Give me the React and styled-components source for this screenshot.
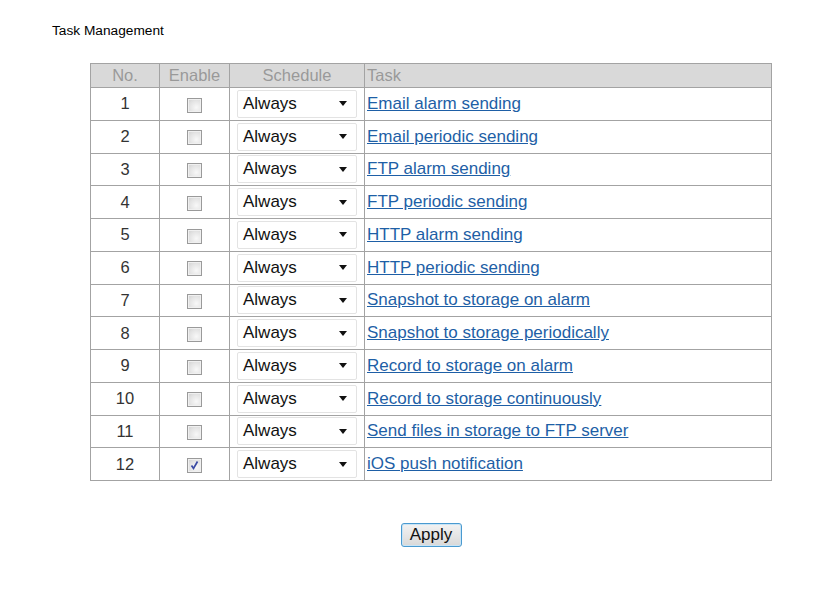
import React from 'react'
import styled, { createGlobalStyle } from 'styled-components'

const GlobalStyle = createGlobalStyle`
  body {
    margin: 0;
    background: #ffffff;
    font-family: "Liberation Sans", Arial, sans-serif;
    color: #000;
  }
`

const Page = styled.div`
  width: 831px;
  min-height: 610px;
  padding-top: 22px;
  box-sizing: border-box;
`

const Title = styled.div`
  font-size: 13.7px;
  margin-left: 52px;
  height: 17px;
  line-height: 17px;
`

const Table = styled.table`
  border-collapse: collapse;
  margin: 24px 0 0 90px;
  width: 682px;
  table-layout: fixed;
  font-size: 16.5px;
`

const Head = styled.th`
  background: #d9d9d9;
  color: #999999;
  font-weight: normal;
  font-size: 16.5px;
  border: 1px solid #a3a3a3;
  height: 23px;
  padding: 0;
  text-align: ${p => p.$left ? 'left' : 'center'};
  padding-left: ${p => p.$left ? '2px' : '0'};
`

const Cell = styled.td`
  border: 1px solid #a3a3a3;
  height: 31.75px;
  padding: 0;
  text-align: ${p => p.$align || 'center'};
  padding-left: ${p => p.$pad || 0};
  color: #333;
  vertical-align: middle;
`

const Check = styled.span`
  display: inline-block;
  width: 13px;
  height: 13px;
  border: 1px solid #9a9a9a;
  background: radial-gradient(circle at 65% 65%, #f8f8f8 0%, #e4e4e4 55%, #cfcfcf 100%);
  box-shadow: inset 0 0 0 1px #f0f0f0;
  position: relative;
  vertical-align: middle;
  svg {
    position: absolute;
    left: 1px;
    top: 1px;
  }
`

const Select = styled.div`
  width: 118px;
  height: 26px;
  border: 1px solid #e3e3e3;
  border-radius: 2px;
  box-sizing: content-box;
  display: flex;
  align-items: center;
  justify-content: space-between;
  background: #fff;
`

const SelectText = styled.span`
  color: #111;
  font-size: 17px;
  padding-left: 5px;
`

const Arrow = styled.span`
  width: 0;
  height: 0;
  border-left: 4px solid transparent;
  border-right: 4px solid transparent;
  border-top: 5px solid #111;
  margin-right: 9px;
`

const TaskLink = styled.a`
  color: #1e5fa6;
  text-decoration: underline;
  font-size: 17px;
`

const Footer = styled.div`
  display: flex;
  justify-content: center;
  width: 682px;
  margin: 42px 0 0 90px;
`

const ApplyButton = styled.button`
  width: 61px;
  height: 24px;
  padding: 0;
  font-family: "Liberation Sans", Arial, sans-serif;
  font-size: 17px;
  color: #111;
  border: 1px solid #4a9ad0;
  border-radius: 3px;
  background: linear-gradient(#f2f2f2 0%, #e6e6e6 50%, #d8d8d8 100%);
  box-shadow: inset 0 0 0 1px #c8e4f6;
`

const tasks = [
  'Email alarm sending',
  'Email periodic sending',
  'FTP alarm sending',
  'FTP periodic sending',
  'HTTP alarm sending',
  'HTTP periodic sending',
  'Snapshot to storage on alarm',
  'Snapshot to storage periodically',
  'Record to storage on alarm',
  'Record to storage continuously',
  'Send files in storage to FTP server',
  'iOS push notification',
]

const Checkbox = ({ checked }) => (
  <Check>
    {checked && (
      <svg width="11" height="11" viewBox="0 0 11 11">
        <path d="M2.5 5.5 L4.5 8.5 L8.5 1.5" stroke="#3a4aa3" strokeWidth="1.7" fill="none" />
      </svg>
    )}
  </Check>
)

const App = () => {
  return (
    <Page>
      <GlobalStyle />
      <Title>Task Management</Title>
      <Table>
        <colgroup>
          <col style={{ width: 69 }} />
          <col style={{ width: 70 }} />
          <col style={{ width: 135 }} />
          <col />
        </colgroup>
        <thead>
          <tr>
            <Head>No.</Head>
            <Head>Enable</Head>
            <Head>Schedule</Head>
            <Head $left>Task</Head>
          </tr>
        </thead>
        <tbody>
          {tasks.map((t, i) => (
            <tr key={t}>
              <Cell>{i + 1}</Cell>
              <Cell><Checkbox checked={i === 11} /></Cell>
              <Cell $align="left" $pad="7px">
                <Select>
                  <SelectText>Always</SelectText>
                  <Arrow />
                </Select>
              </Cell>
              <Cell $align="left" $pad="2px">
                <TaskLink href="#">{t}</TaskLink>
              </Cell>
            </tr>
          ))}
        </tbody>
      </Table>
      <Footer>
        <ApplyButton>Apply</ApplyButton>
      </Footer>
    </Page>
  )
}

export default App
